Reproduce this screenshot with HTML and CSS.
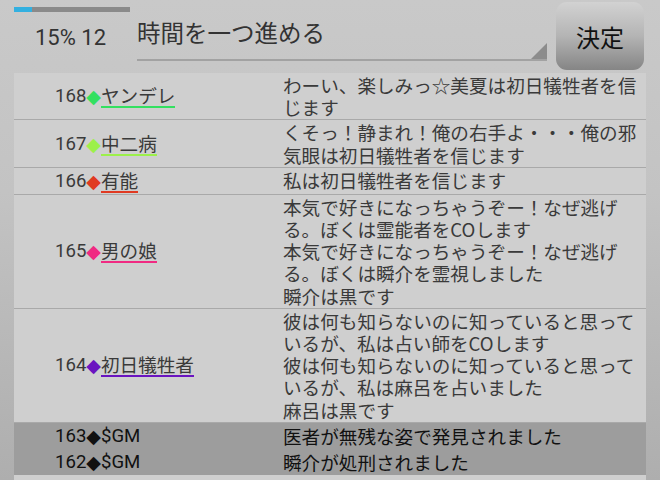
FILE: index.html
```html
<!DOCTYPE html>
<html lang="ja">
<head>
  <meta charset="UTF-8">
  <title>村ログ</title>
  <link rel="stylesheet" href="styles.css">
</head>
<body>
  <div class="screen">
    <div class="topbar">
      <div class="status">
        <div class="progress"><span class="progress-fill"></span></div>
        <div class="count">15% 12</div>
      </div>
      <div class="command">時間を一つ進める</div>
      <button class="decide">決定</button>
    </div>

    <div class="log">
      <div class="log-row">
        <div class="who">168<span class="mark c-yandere">◆</span><span class="name u-yandere">ヤンデレ</span></div>
        <div class="say">わーい、楽しみっ☆美夏は初日犠牲者を信じます</div>
      </div>
      <div class="log-row">
        <div class="who">167<span class="mark c-chuni">◆</span><span class="name u-chuni">中二病</span></div>
        <div class="say">くそっ！静まれ！俺の右手よ・・・俺の邪気眼は初日犠牲者を信じます</div>
      </div>
      <div class="log-row">
        <div class="who">166<span class="mark c-yuno">◆</span><span class="name u-yuno">有能</span></div>
        <div class="say">私は初日犠牲者を信じます</div>
      </div>
      <div class="log-row">
        <div class="who">165<span class="mark c-otoko">◆</span><span class="name u-otoko">男の娘</span></div>
        <div class="say">本気で好きになっちゃうぞー！なぜ逃げる。ぼくは霊能者をCOします<br>本気で好きになっちゃうぞー！なぜ逃げる。ぼくは瞬介を霊視しました<br>瞬介は黒です</div>
      </div>
      <div class="log-row">
        <div class="who">164<span class="mark c-victim">◆</span><span class="name u-victim">初日犠牲者</span></div>
        <div class="say">彼は何も知らないのに知っていると思っているが、私は占い師をCOします<br>彼は何も知らないのに知っていると思っているが、私は麻呂を占いました<br>麻呂は黒です</div>
      </div>
      <div class="log-row system">
        <div class="who">163<span class="mark">◆</span>$GM</div>
        <div class="say">医者が無残な姿で発見されました</div>
      </div>
      <div class="log-row system">
        <div class="who">162<span class="mark">◆</span>$GM</div>
        <div class="say">瞬介が処刑されました</div>
      </div>
    </div>
  </div>
</body>
</html>
```

FILE: styles.css
```css
html, body {
  margin: 0;
  padding: 0;
  height: 100%;
}
body {
  background: linear-gradient(to bottom, #c9c9c9 0%, #c3c3c3 40%, #aeaeae 100%);
  font-family: Roboto, "Noto Sans CJK JP", sans-serif;
  color: #3a3a3a;
  overflow: hidden;
}
.screen {
  width: 660px;
  height: 480px;
  display: flex;
  flex-direction: column;
}

/* top bar */
.topbar {
  display: flex;
  height: 73px;
  padding-left: 14px;
  box-sizing: border-box;
}
.status {
  width: 116px;
  padding-top: 7px;
}
.progress {
  height: 5px;
  background: #8a8a8a;
}
.progress-fill {
  display: block;
  width: 18px;
  height: 5px;
  background: #33b0e0;
}
.count {
  margin: 13px 0 0 21px;
  font-size: 22px;
  color: #333;
}
.command {
  width: 410px;
  margin: 0 9px 0 7px;
  height: 61px;
  box-sizing: border-box;
  padding-top: 15px;
  font-size: 23.5px;
  color: #333;
  border-bottom: 2px solid #a2a2a2;
  position: relative;
}
.command::after {
  content: "";
  position: absolute;
  right: 0;
  bottom: 0;
  border-style: solid;
  border-width: 0 0 16px 16px;
  border-color: transparent transparent #8c8c8c transparent;
}
.decide {
  width: 88px;
  height: 68px;
  margin-top: 2px;
  border: none;
  border-radius: 11px;
  background: linear-gradient(to bottom, #d2d2d2 0%, #b4b4b4 50%, #858585 100%);
  font-family: "Noto Sans CJK JP", sans-serif;
  font-size: 24px;
  color: #111;
  padding: 0;
}

/* log list */
.log {
  flex: 1;
  margin-left: 14px;
  width: 632px;
  background: #cfcfcf;
}
.log-row {
  display: grid;
  grid-template-columns: 269px 1fr;
  border-bottom: 1px solid #a9a9a9;
  font-size: 18.6px;
  line-height: 22.2px;
}
.who {
  display: flex;
  align-items: center;
  padding: 1px 0 1px 41px;
}
.say {
  padding: 1px 6px 1px 0;
  font-family: "Noto Sans CJK JP", sans-serif;
}
.mark {
  font-family: "DejaVu Sans", sans-serif;
  font-size: 19px;
}
.name {
  font-family: "Noto Sans CJK JP", sans-serif;
  border-bottom: 2px solid;
  line-height: 22px;
}
.c-yandere { color: #33e060; }
.u-yandere { border-color: #33e060; }
.c-chuni { color: #9cf04a; }
.u-chuni { border-color: #9cf04a; }
.c-yuno { color: #e03a22; }
.u-yuno { border-color: #e03a22; }
.c-otoko { color: #f02a82; }
.u-otoko { border-color: #f02a82; }
.c-victim { color: #6a14c0; }
.u-victim { border-color: #6a14c0; }

.log-row.system {
  background: #9d9d9d;
  color: #111;
  border-bottom: none;
}
.log-row.system .who,
.log-row.system .say {
  padding-top: 2px;
  padding-bottom: 2px;
}
```
